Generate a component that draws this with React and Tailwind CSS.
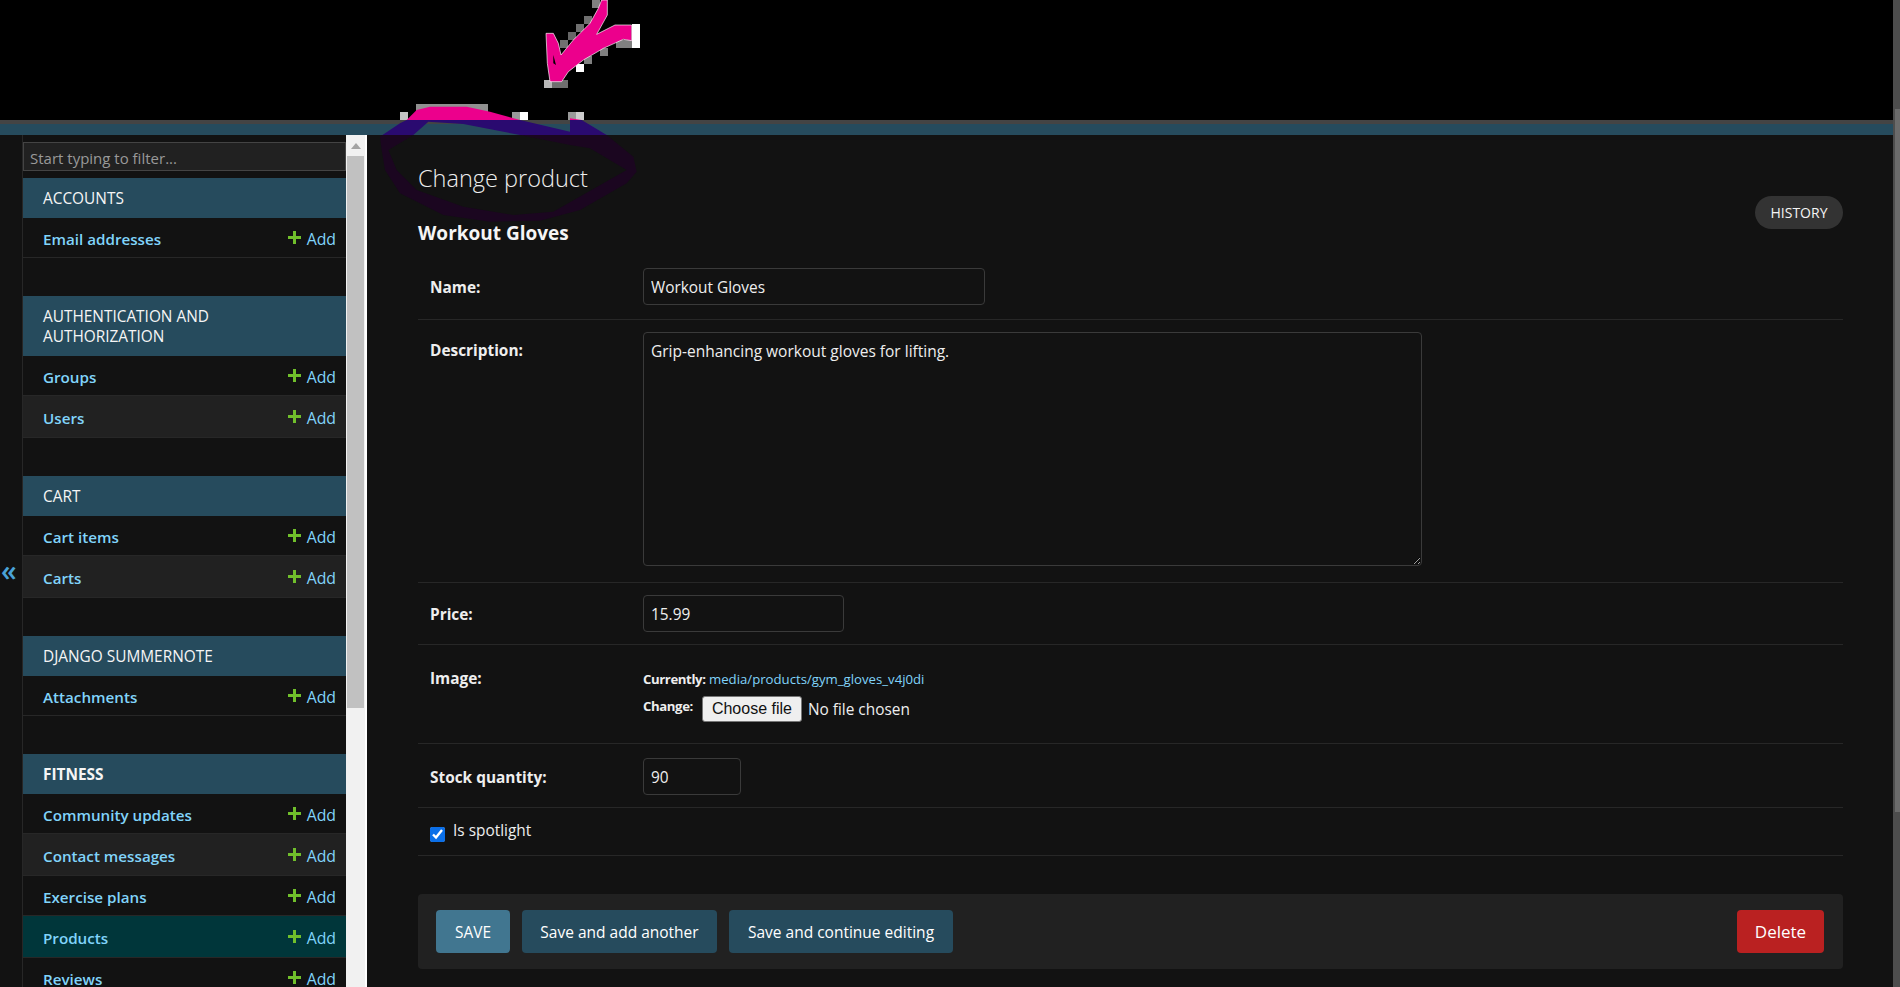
const SECTIONS = [
  { title: 'Accounts', rows: ['Email addresses'] },
  { title: 'Authentication and Authorization', rows: ['Groups', 'Users'] },
  { title: 'Cart', rows: ['Cart items', 'Carts'] },
  { title: 'Django Summernote', rows: ['Attachments'] },
  { title: 'Fitness', bold: true, rows: ['Community updates', 'Contact messages', 'Exercise plans', 'Products', 'Reviews'] },
];

function ModelRow({ name, index }) {
  const current = name === 'Products';
  const bg = current ? 'bg-[#00363a]' : index % 2 ? 'bg-[#212121]' : 'bg-[#121212]';
  return (
    <div className={`flex items-center justify-between shrink-0 pl-[20px] pr-[10px] pt-[3px] border-b border-[#272727] ${index % 2 ? 'h-[42px]' : 'h-[40px]'} ${bg}`}>
      <a className="text-[15.2px] font-semibold text-[#81d4fa]">{name}</a>
      <span className="flex items-center pt-[1px] text-[15.8px] text-[#81d4fa]">
        <svg width="13" height="13" viewBox="0 0 13 13" className="mr-[6px] -mt-[5px]">
          <path d="M5 0h3v5h5v3H8v5H5V8H0V5h5z" fill="#70bf2b" />
        </svg>
        Add
      </span>
    </div>
  );
}

function Sidebar() {
  return (
    <div className="w-[323px] shrink-0 flex flex-col pt-[7px] overflow-hidden">
      <input
        placeholder="Start typing to filter..."
        className="shrink-0 h-[29px] mb-[7px] px-[6px] pt-[2px] bg-[#212121] border border-[#444] text-[15px] placeholder:text-[#999]"
      />
      {SECTIONS.map((s) => (
        <div key={s.title} className="shrink-0 mb-[38px] flex flex-col">
          <div className={`flex items-center px-[20px] pt-[11px] pb-[9px] leading-[20px] min-h-[40px] bg-[#264b5d] text-[15.4px] uppercase text-[#f5f5f5] ${s.bold ? 'font-bold' : ''}`}>
            {s.title}
          </div>
          {s.rows.map((r, i) => <ModelRow key={r} name={r} index={i} />)}
        </div>
      ))}
    </div>
  );
}

function SideScrollbar() {
  return (
    <div className="w-[21px] shrink-0 flex flex-col bg-[#f1f1f1] border-r-2 border-white">
      <div className="h-[21px] flex items-center justify-center">
        <div className="w-0 h-0 border-x-[5px] border-x-transparent border-b-[6px] border-b-[#a3a3a3]" />
      </div>
      <div className="h-[552px] mx-[1px] bg-[#c1c1c1]" />
    </div>
  );
}

function FormRow({ label, labelCls = 'mt-[8px]', className, children }) {
  return (
    <div className={`flex items-start px-[12px] border-b border-[#272727] ${className}`}>
      <label className={`w-[213px] shrink-0 text-[15.4px] font-bold text-[#eeeeee] leading-[24px] ${labelCls}`}>{label}</label>
      {children}
    </div>
  );
}

const inputCls = 'h-[37px] px-[7px] pt-[2px] bg-[#121212] border border-[#3a3a3a] rounded-[4px] text-[15.4px] text-[#eeeeee]';

function ChangeForm() {
  return (
    <div className="flex-1 min-w-0 pl-[51px] pr-[50px] pt-[24px] bg-[#121212] text-[#eeeeee]">
      <div className="flex justify-between items-start">
        <div>
          <h1 className="text-[23.5px] font-light leading-[38px] text-[#eeeeee]">Change product</h1>
          <h2 className="mt-[22px] text-[19px] font-bold leading-[28px] text-[#f5f5f5]">Workout Gloves</h2>
        </div>
        <a className="mt-[37px] h-[33px] w-[88px] flex items-center justify-center rounded-full bg-[#333333] text-[14px] text-[#f5f5f5]">HISTORY</a>
      </div>

      <div className="mt-[8px]">
        <FormRow label="Name:" className="pt-[13px] h-[65px]">
          <input defaultValue="Workout Gloves" className={`${inputCls} w-[342px]`} />
        </FormRow>
        <FormRow label="Description:" labelCls="mt-[7px]" className="pt-[12px] h-[263px]">
          <textarea
            defaultValue="Grip-enhancing workout gloves for lifting."
            className="w-[779px] h-[234px] px-[7px] pt-[7px] pb-[5px] bg-[#121212] border border-[#3a3a3a] rounded-[4px] text-[15.5px] text-[#eeeeee]"
          />
        </FormRow>
        <FormRow label="Price:" className="pt-[12px] h-[62px]">
          <input defaultValue="15.99" className={`${inputCls} w-[201px]`} />
        </FormRow>
        <FormRow label="Image:" labelCls="mt-[1px]" className="pt-[21px] h-[99px]">
          <div className="flex flex-col text-[13.2px]">
            <p className="leading-[24px] pt-[1px]">
              <span className="font-bold tracking-[-0.4px]">Currently:</span>{' '}
              <a className="text-[#81d4fa]">media/products/gym_gloves_v4j0di</a>
            </p>
            <div className="flex items-start mt-[5px]">
              <span className="font-bold tracking-[-0.4px] leading-[20px] mr-[9px]">Change:</span>
              <button className="h-[26px] w-[100px] bg-[#efefef] border border-[#767676] rounded-[3px] font-['Liberation_Sans',sans-serif] text-[16px] text-[#111]">
                Choose file
              </button>
              <span className="ml-[6px] text-[15.4px] leading-[28px]">No file chosen</span>
            </div>
          </div>
        </FormRow>
        <FormRow label="Stock quantity:" className="pt-[14px] h-[64px]">
          <input defaultValue="90" className={`${inputCls} w-[98px]`} />
        </FormRow>
        <div className="flex items-start h-[48px] px-[12px] pt-[11px] border-b border-[#272727]">
          <input type="checkbox" defaultChecked className="mt-[8px] w-[15px] h-[15px] accent-[#0b6fe8]" />
          <label className="ml-[8px] text-[15.4px] leading-[24px] text-[#eeeeee]">Is spotlight</label>
        </div>
      </div>

      <div className="mt-[38px] h-[75px] flex items-center justify-between pl-[18px] pr-[19px] rounded-[4px] bg-[#212121]">
        <div className="flex gap-[12px]">
          <button className="h-[43px] w-[74px] pt-[2px] rounded-[4px] bg-[#417690] text-[15.4px] text-white">SAVE</button>
          <button className="h-[43px] w-[195px] pt-[2px] rounded-[4px] bg-[#264b5d] text-[15.5px] text-white">Save and add another</button>
          <button className="h-[43px] w-[224px] pt-[2px] rounded-[4px] bg-[#264b5d] text-[15.5px] text-white">Save and continue editing</button>
        </div>
        <button className="h-[43px] w-[87px] rounded-[4px] bg-[#ba2121] text-[17px] text-white">Delete</button>
      </div>
    </div>
  );
}

// hand-drawn marks sitting on top of the screenshot, coords are 3x
const RING = 'M140 360 L170 330 L210 320 L320 320 L390 335 L480 360 L630 395 L630 355 L665 360 L740 405 L820 470 L830 515 L800 550 L660 630 L540 662 L390 665 L250 645 L120 580 L75 510 L65 450 L60 410 L120 370 Z M205 365 L160 405 L85 450 L110 510 L170 570 L310 620 L460 645 L580 635 L800 510 L690 445 L630 435 L480 405 L310 372 Z';
const ARROW = 'M725 0 L742 0 L742 45 L710 103 L765 75 L815 75 L815 122 L790 118 L730 145 L670 180 L625 215 L605 245 L570 245 L562 190 L558 100 L580 100 L595 130 L603 165 L640 120 L690 70 L715 25 Z';
const BLOCKS = [
  [552, 240, 24, 24, '#b8b8b8'], [576, 240, 48, 24, '#6f6f6f'], [648, 192, 24, 24, '#ffffff'],
  [672, 168, 24, 24, '#808080'], [720, 144, 24, 24, '#808080'], [768, 120, 48, 24, '#808080'],
  [816, 72, 24, 72, '#ffffff'], [696, 0, 24, 24, '#808080'], [672, 48, 24, 24, '#707070'],
  [648, 72, 24, 24, '#707070'], [624, 96, 24, 24, '#666666'], [600, 120, 24, 24, '#707070'],
  [120, 336, 24, 24, '#c4c4c4'], [168, 312, 216, 24, '#909090'], [456, 336, 24, 24, '#999999'],
  [480, 336, 24, 24, '#ffffff'], [624, 336, 24, 24, '#999999'], [648, 336, 24, 24, '#cccccc'],
];

function Annotation() {
  return (
    <svg viewBox="0 0 960 690" className="absolute left-[360px] top-0 w-[320px] h-[230px] pointer-events-none">
      <defs>
        <clipPath id="above"><rect x="0" y="0" width="960" height="360" /></clipPath>
        <clipPath id="band"><rect x="0" y="360" width="960" height="45" /></clipPath>
        <clipPath id="below"><rect x="0" y="405" width="960" height="285" /></clipPath>
      </defs>
      {BLOCKS.map(([x, y, w, h, c]) => <rect key={`${x}-${y}`} x={x} y={y} width={w} height={h} fill={c} />)}
      <path d={ARROW} fill="#ec008c" stroke="#fff" strokeWidth="2" />
      <path d="M580 165 L588 195 L580 190 Z" fill="#000" />
      <path d={RING} fillRule="evenodd" fill="#ec008c" clipPath="url(#above)" />
      <path d={RING} fillRule="evenodd" fill="#2a0a70" clipPath="url(#band)" />
      <path d={RING} fillRule="evenodd" fill="#1b0620" clipPath="url(#below)" />
    </svg>
  );
}

export default function App() {
  return (
    <div className="relative h-[987px] flex overflow-hidden bg-black font-['Open_Sans',sans-serif]">
      <div className="flex-1 min-w-0 flex flex-col">
        <div className="h-[120px] shrink-0 bg-black" />
        <div className="h-[4px] shrink-0 bg-[#444444]" />
        <div className="h-[11px] shrink-0 bg-[#264b5d]" />
        <div className="flex-1 min-h-0 flex bg-[#121212]">
          <button className="w-[23px] shrink-0 flex items-center justify-start pl-[1px] pt-[18px] border-r border-[#272727] text-[28px] font-semibold text-[#4aa3d8]">«</button>
          <Sidebar />
          <SideScrollbar />
          <ChangeForm />
        </div>
      </div>
      <div className="w-[7px] shrink-0 flex flex-col bg-[#4d4d4d] pt-[109px]">
        <div className="h-[703px] ml-[2px] bg-[#6b6b6b]" />
      </div>
      <Annotation />
    </div>
  );
}
